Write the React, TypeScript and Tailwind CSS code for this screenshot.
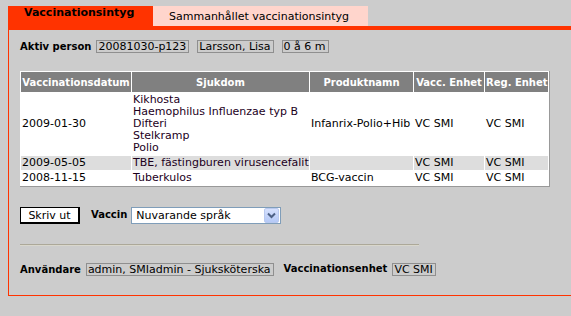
import React from "react";

type Row = {
  date: string;
  diseases: string[];
  product: string;
  vaccUnit: string;
  regUnit: string;
  shaded?: boolean;
};

const rows: Row[] = [
  {
    date: "2009-01-30",
    diseases: ["Kikhosta", "Haemophilus Influenzae typ B", "Difteri", "Stelkramp", "Polio"],
    product: "Infanrix-Polio+Hib",
    vaccUnit: "VC SMI",
    regUnit: "VC SMI",
  },
  {
    date: "2009-05-05",
    diseases: ["TBE, fästingburen virusencefalit"],
    product: "",
    vaccUnit: "VC SMI",
    regUnit: "VC SMI",
    shaded: true,
  },
  {
    date: "2008-11-15",
    diseases: ["Tuberkulos"],
    product: "BCG-vaccin",
    vaccUnit: "VC SMI",
    regUnit: "VC SMI",
  },
];

function Field({ children }: { children: React.ReactNode }) {
  return (
    <span className="h-[13px] border border-[#8f8f8f] pl-px pr-[2px] text-[11px] leading-[11px] whitespace-nowrap">
      {children}
    </span>
  );
}

function Label({ children }: { children: React.ReactNode }) {
  return <span className="text-[10px] font-bold leading-[13px] whitespace-nowrap">{children}</span>;
}

export default function App() {
  return (
    <div className="min-h-screen w-full overflow-hidden bg-[#cccccc] pt-[6px] font-['DejaVu_Sans',Verdana,sans-serif] text-[11px] text-black">
      {/* Tabs */}
      <div className="flex pl-2">
        <div className="h-5 w-[145px] bg-[#ff3300] pl-4 text-[11px] font-bold leading-[14px]">Vaccinationsintyg</div>
        <div className="h-5 w-[215px] bg-[#ffd5cc] pl-4 pt-[4px] text-[11px] leading-[14px]">Sammanhållet vaccinationsintyg</div>
      </div>

      <div className="ml-2 border-t-4 border-l border-b border-[#ff3300] pl-[11px] pt-[10px] pb-[17px]">
        {/* Active person */}
        <div className="flex items-center">
          <Label>Aktiv person</Label>
          <div className="ml-[5px] flex gap-2">
            <Field>20081030-p123</Field>
            <Field>Larsson, Lisa</Field>
            <Field>0 å 6 m</Field>
          </div>
        </div>

        {/* Vaccination table */}
        <table className="mt-[18px] w-[530px] table-fixed border-separate border-spacing-px border-r border-b border-r-[#999999] border-b-[#999999] bg-white">
          <thead>
            <tr className="h-5 bg-[#808080] text-[10px] font-bold text-white">
              <th className="w-[110px] px-px text-center whitespace-nowrap">Vaccinationsdatum</th>
              <th className="w-[177px] px-px text-center">Sjukdom</th>
              <th className="w-[103px] px-px text-center">Produktnamn</th>
              <th className="w-[70px] px-px text-center whitespace-nowrap">Vacc. Enhet</th>
              <th className="w-[63px] px-px text-center whitespace-nowrap">Reg. Enhet</th>
            </tr>
          </thead>
          <tbody className="leading-[12px]">
            {rows.map((r) => (
              <tr key={r.date} className={r.shaded ? "bg-[#dddddd]" : "bg-white"}>
                <td className="px-px py-px align-middle whitespace-nowrap">{r.date}</td>
                <td className="px-px py-px align-middle whitespace-nowrap text-[#1c001c]">
                  {r.diseases.map((d) => (
                    <div key={d}>{d}</div>
                  ))}
                </td>
                <td className="px-px py-px align-middle whitespace-nowrap">{r.product}</td>
                <td className="px-px py-px align-middle whitespace-nowrap">{r.vaccUnit}</td>
                <td className="px-px py-px align-middle whitespace-nowrap">{r.regUnit}</td>
              </tr>
            ))}
          </tbody>
        </table>

        {/* Print + language */}
        <div className="mt-[20px] flex items-center">
          <button className="h-[17px] w-[60px] border border-black border-r-2 border-b-2 bg-white text-[11px] leading-[13px]">
            Skriv ut
          </button>
          <span className="ml-[11px]">
            <Label>Vaccin</Label>
          </span>
          <div className="ml-[4px] flex h-[17px] w-[150px] items-center border border-[#7f9db9] bg-white pl-[4px]">
            <span className="flex-1 text-[11px] leading-[13px]">Nuvarande språk</span>
            <span className="mr-px flex h-[15px] w-[15px] items-center justify-center rounded-[2px] border border-[#b9c9ef] bg-gradient-to-b from-[#d6e1fd] to-[#b5c9f7]">
              <svg width="9" height="7" viewBox="0 0 9 7">
                <path d="M1 1.5 L4.5 5 L8 1.5" fill="none" stroke="#4d6185" strokeWidth="2" />
              </svg>
            </span>
          </div>
        </div>

        {/* Divider */}
        <div className="mt-[20px] w-[399px] border-t border-b border-t-[#aca899] border-b-[#d9d7cc]" />

        {/* User row */}
        <div className="mt-[15px] flex items-center">
          <Label>Användare</Label>
          <span className="ml-[5px] flex">
            <Field>admin, SMIadmin - Sjuksköterska</Field>
          </span>
          <span className="ml-[10px]">
            <Label>Vaccinationsenhet</Label>
          </span>
          <span className="ml-[5px] flex">
            <Field>VC SMI</Field>
          </span>
        </div>
      </div>
    </div>
  );
}
